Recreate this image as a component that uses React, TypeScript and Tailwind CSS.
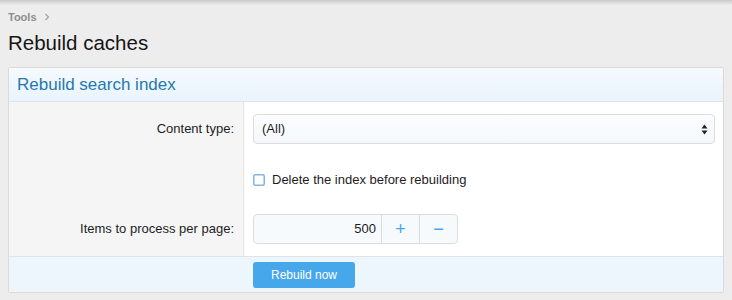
import React from "react";

const font = { fontFamily: '"Liberation Sans", Arial, sans-serif' };

function SelectArrows() {
  return (
    <svg width="7" height="11" viewBox="0 0 7 11" className="text-[#222]">
      <path d="M3.5 0.5 L6.5 4.5 H0.5 Z" fill="currentColor" />
      <path d="M3.5 10.5 L6.5 6.5 H0.5 Z" fill="currentColor" />
    </svg>
  );
}

function Checkbox() {
  return (
    <svg width="12" height="12" viewBox="0 0 12 12" className="shrink-0">
      <rect x="0.75" y="0.75" width="10.5" height="10.5" rx="1.5" fill="#ffffff" stroke="#7fb6e3" strokeWidth="1.5" />
    </svg>
  );
}

function Row({ label, children, className }: { label?: string; children: React.ReactNode; className?: string }) {
  return (
    <div className="flex">
      <div className="w-[235px] shrink-0 bg-[#f5f5f5] border-r border-[#e3e3e3] flex items-center justify-end pr-[9px] text-[13px] text-[#1d1d1d]">
        {label}
      </div>
      <div className={"flex-1 pl-[9px] pr-[8px] " + (className ?? "")}>{children}</div>
    </div>
  );
}

export default function App() {
  return (
    <div className="w-[732px] h-[300px] bg-[#ededed] overflow-hidden" style={font}>
      <div className="h-[5px] bg-gradient-to-b from-[#c9c9c9] to-[#ededed]" />
      <div className="px-2">
        {/* Breadcrumb */}
        <div className="flex items-center gap-[7px] h-[24px] text-[11px] font-bold text-[#8d8d8d]">
          <span>Tools</span>
          <svg width="6" height="8" viewBox="0 0 6 8">
            <path d="M1.5 1 L4.5 4 L1.5 7" fill="none" stroke="#a0a0a0" strokeWidth="1.1" />
          </svg>
        </div>
        <h1 className="text-[20.5px] leading-[28px] text-[#151515]">Rebuild caches</h1>

        {/* Panel */}
        <div className="mt-[10px] w-[716px] border border-[#dadada] rounded-[2px] bg-white overflow-hidden">
          <div className="h-[34px] flex items-center px-2 bg-gradient-to-b from-[#f5fafe] to-[#eaf4fc] border-b border-[#dce3ea]">
            <h2 className="text-[17px] text-[#2577b1]">Rebuild search index</h2>
          </div>

          <Row label="Content type:" className="pt-[12px] pb-[12px]">
            <div className="h-[30px] rounded-[4px] border border-[#dcdcdc] bg-gradient-to-b from-[#fbfdff] to-[#f4f8fc] flex items-center justify-between pl-[8px] pr-[6px] text-[13px] text-[#1d1d1d]">
              <span>(All)</span>
              <SelectArrows />
            </div>
          </Row>

          <Row className="pt-[16px] pb-[14px]">
            <div className="flex items-center gap-[7px] h-[16px] text-[13px] text-[#1d1d1d]">
              <Checkbox />
              <span>Delete the index before rebuilding</span>
            </div>
          </Row>

          <Row label="Items to process per page:" className="pt-[12px] pb-[12px]">
            <div className="flex w-[205px] h-[30px] rounded-[4px] border border-[#dcdcdc] bg-[#f7fafd] text-[13px]">
              <div className="flex-1 flex items-center justify-end pr-[5px] text-[#1d1d1d]">500</div>
              <div className="w-[38px] flex items-center justify-center border-l border-[#dcdcdc] text-[#47a7eb] text-[18px]">+</div>
              <div className="w-[38px] flex items-center justify-center border-l border-[#dcdcdc] text-[#47a7eb] text-[18px]">−</div>
            </div>
          </Row>

          <div className="h-[36px] bg-[#edf5fd] border-t border-[#dce3ea] flex items-center pl-[244px]">
            <button className="w-[102px] h-[26px] rounded-[3px] bg-[#47a7eb] text-white text-[12px]">Rebuild now</button>
          </div>
        </div>
      </div>
    </div>
  );
}
